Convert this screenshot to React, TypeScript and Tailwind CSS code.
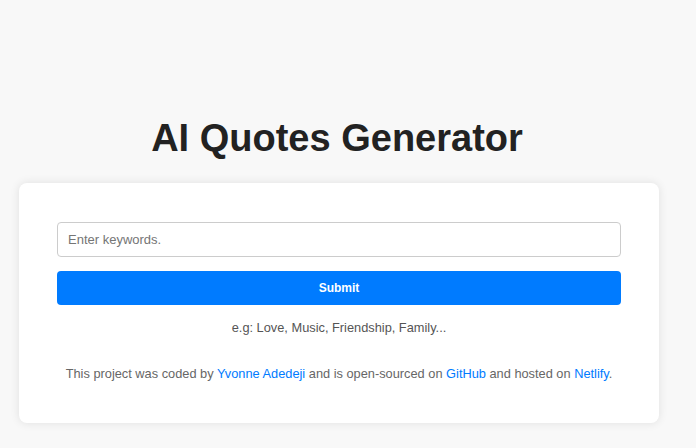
export default function App() {
  return (
    <div className="w-full h-[448px] bg-[#f8f8f8] font-['Liberation_Sans',Arial,sans-serif]">
      <div className="w-[678px] flex flex-col items-center">
        <h1 className="mt-[116px] pr-[4px] text-[38px] leading-[44px] font-bold text-[#222]">
          AI Quotes Generator
        </h1>

        <div className="mt-[23px] w-[640px] bg-white rounded-lg shadow-[0_0_10px_rgba(0,0,0,0.1)] px-[38px] pt-[39px] pb-[41px]">
          <input
            type="text"
            placeholder="Enter keywords."
            className="block w-full h-[35px] border border-[#ccc] rounded px-[10px] text-[13px] text-[#333] placeholder:text-[#757575] outline-none"
          />
          <button className="block w-full h-[34px] mt-[14px] bg-[#007bff] rounded text-white text-[12px] font-bold">
            Submit
          </button>

          <p className="mt-[15px] text-center text-[12.8px] leading-[16px] text-[#555]">
            e.g: Love, Music, Friendship, Family...
          </p>

          <p className="mt-[30px] text-center text-[12.8px] leading-[16px] text-[#666]">
            This project was coded by{" "}
            <a href="#" className="text-[#007bff]">
              Yvonne Adedeji
            </a>{" "}
            and is open-sourced on{" "}
            <a href="#" className="text-[#007bff]">
              GitHub
            </a>{" "}
            and hosted on{" "}
            <a href="#" className="text-[#007bff]">
              Netlify
            </a>
            .
          </p>
        </div>
      </div>
    </div>
  );
}
